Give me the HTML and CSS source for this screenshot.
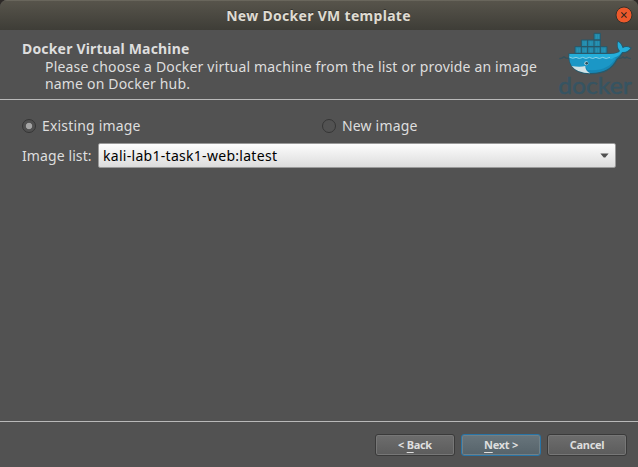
FILE: index.html
```html
<!DOCTYPE html>
<html lang="en">
<head>
<meta charset="utf-8">
<title>New Docker VM template</title>
<link rel="stylesheet" href="styles.css">
</head>
<body>
<div class="window">
  <header class="titlebar">
    <h1 class="title">New Docker VM template</h1>
    <button class="close" aria-label="Close"><svg viewBox="0 0 18 18" width="18" height="18"><circle cx="9" cy="9" r="8" fill="#ed592b" stroke="#34322c"/><path d="M6.4 6.4l5.2 5.2M11.6 6.4l-5.2 5.2" stroke="#3b291f" stroke-width="1.2"/></svg></button>
  </header>
  <section class="banner">
    <div class="intro">
      <h2>Docker Virtual Machine</h2>
      <p>Please choose a Docker virtual machine from the list or provide an image<br>name on Docker hub.</p>
    </div>
    <svg class="logo" viewBox="24 96 228 195" width="76" height="65">
      <g fill="#2189ab" stroke="#285768" stroke-width="3">
        <path d="M75 140h96v20H75zM94 120h57v20H94zM132 100h19v20h-19z"/>
        <path d="M94 140v20M113 120v40M132 120v40M151 140v20" fill="none"/>
      </g>
      <path d="M83 145v12M88 145v12M102 145v12M107 145v12M121 145v12M126 145v12M140 145v12M145 145v12M159 145v12M164 145v12M102 124v12M107 124v12M121 124v12M126 124v12M140 124v12M145 124v12M140 104v12M145 104v12" stroke="#3199b8" stroke-width="2"/>
      <path d="M28 176q9-1 14-6 6 6 17 5M202 174q10 3 17-3 6 6 11 0 6 5 13 5" fill="none" stroke="#34505b" stroke-width="4"/>
      <path d="M57 162H180Q204 161 210 153Q199 143 204 124Q215 130 219 143Q230 136 243 144Q235 158 218 158Q211 171 201 178C188 205 162 222 121 221C78 220 55 200 57 162Z" fill="#1687b5" stroke="#285a6c" stroke-width="4"/>
      <path d="M58 174H198C181 201 156 213 113 210L106 198Q86 204 65 198Q58 188 58 174Z" fill="#1b97c6"/>
      <path d="M58 162H181Q205 161 210 153Q200 142 204 125Q214 130 218 145Q229 137 241 145Q232 157 216 156Q207 170 190 174Q184 180 174 173Q164 178 155 173Q145 178 136 173Q126 178 117 173Q107 178 98 173Q88 178 79 173Q69 178 58 173Z" fill="#24aeda"/>
      <path d="M58 171q10 7 20 1q10 7 20 0q10 7 20 0q10 7 20 0q10 7 20 0q10 7 22 0" fill="none" stroke="#9bd5e4" stroke-width="2.5"/>
      <path d="M65 198Q89 203 106 198Q105 213 121 220Q82 220 65 198Z" fill="#d2e2e5"/>
      <circle cx="109" cy="190" r="6" fill="#b9d6df"/><circle cx="110" cy="190" r="4" fill="#284e5b"/>
      <text class="wordmark" x="25" y="282" textLength="220" lengthAdjust="spacingAndGlyphs">docker</text>
    </svg>
  </section>
  <main class="content">
    <div class="choices">
      <label class="choice"><i class="radio on"></i><span>Existing image</span></label>
      <label class="choice"><i class="radio"></i><span>New image</span></label>
    </div>
    <div class="field">
      <span class="label">Image list:</span>
      <div class="combo"><span class="value">kali-lab1-task1-web:latest</span><svg width="9" height="5" viewBox="0 0 9 5"><path d="M.4.5h8.2L5.3 4.5H3.7Z" fill="#505050"/></svg></div>
    </div>
  </main>
  <footer class="actions">
    <button class="btn">&lt; <u>B</u>ack</button>
    <button class="btn primary"><u>N</u>ext &gt;</button>
    <button class="btn">Cancel</button>
  </footer>
</div>
</body>
</html>
```
FILE: styles.css
```css
* { box-sizing: border-box; }
body { margin: 0; background: #2d2927; font-family: "Noto Sans", "Open Sans", sans-serif; color: #dedede; }
h1, h2, p { margin: 0; }
button { font: inherit; color: inherit; padding: 0; }
.window { width: 638px; height: 467px; display: flex; flex-direction: column; background: #525252; border-radius: 7px 7px 0 0; overflow: hidden; white-space: nowrap; }
.titlebar { height: 30px; flex: none; display: grid; grid-template-columns: 1fr auto 1fr; align-items: center; background: linear-gradient(#57544b, #3e3d37); border-top: 1px solid #69665c; }
.title { grid-column: 2; font-size: 14px; line-height: 28px; color: #dfdbd2; text-shadow: 0 -1px #33322d; letter-spacing: .3px; margin-right: 1px; }
.close { justify-self: end; width: 18px; height: 18px; margin: 0 5px 1px 0; border: 0; background: none; display: block; }
.close svg { display: block; }
.banner { height: 70px; flex: none; border-bottom: 1px solid #b9b9b9; display: flex; justify-content: space-between; padding: 2px 4px 0 22px; }
.intro { padding-top: 8px; letter-spacing: .175px; }
h2 { font-size: 14px; line-height: 17px; }
.intro p { padding-left: 23px; font-size: 14px; line-height: 17px; padding-top: 1px; }
.logo { flex: none; overflow: visible; }
.wordmark { font: 72px Lato, sans-serif; fill: #365462; stroke: #365462; stroke-width: 1.5px; }
.content { flex: 1; padding: 17px 22px 0; font-size: 14px; letter-spacing: .18px; }
.choices { display: grid; grid-template-columns: 300px 1fr; height: 18px; }
.choice { display: flex; align-items: center; gap: 6px; line-height: 18px; }
.radio { width: 14px; height: 14px; border: 1px solid #353535; border-radius: 50%; }
.radio.on { background: radial-gradient(circle, #a5a5a5 0 2.8px, #505050 3.6px); }
.field { display: flex; align-items: center; margin-top: 8px; height: 25px; }
.label { width: 76px; letter-spacing: .1px; }
.combo { flex: 1; height: 25px; border: 1px solid #999; border-radius: 2px; background: linear-gradient(#fdfdfd, #dcdcdc); color: #000; display: flex; align-items: center; justify-content: space-between; padding: 0 6px 0 4px; letter-spacing: .29px; }
.actions { height: 46px; flex: none; border-top: 1px solid #b9b9b9; display: flex; justify-content: flex-end; gap: 6px; padding: 12px 11px 0; }
.btn { width: 80px; height: 22px; border: 1px solid #3a3a3a; border-radius: 3px; background: linear-gradient(#6d6d6d, #5c5c5c); box-shadow: inset 0 0 0 1px #777; font-size: 11px; font-weight: 700; line-height: 18px; letter-spacing: -.3px; }
.btn.primary { border-color: #2874a6; background: linear-gradient(#68757c, #56636a); box-shadow: inset 0 0 0 1px #708087; }
.btn u { text-underline-offset: 3px; text-decoration-skip-ink: none; text-decoration-thickness: 1px; }
```
